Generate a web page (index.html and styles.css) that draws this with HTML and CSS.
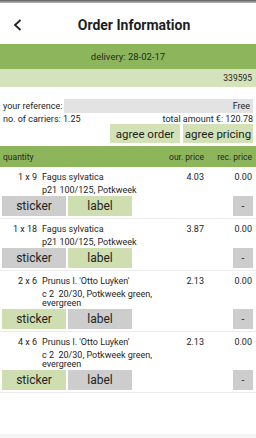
FILE: index.html
```html
<!DOCTYPE html>
<html>
<head>
<meta charset="utf-8">
<link rel="stylesheet" href="styles.css">
</head>
<body>
<div class="statusbar"></div>
<header class="appbar">
  <span class="back"><svg width="10" height="12" viewBox="0 0 10 12"><polyline points="7.5,1 2,6 7.5,11" fill="none" stroke="#222" stroke-width="1.8"/></svg></span>
  <h1 class="title">Order Information</h1>
  <span></span>
</header>
<div class="delivery">delivery: 28-02-17</div>
<div class="orderno">339595</div>
<section class="info">
  <div class="ref-row">
    <span class="ref-label">your reference:</span>
    <div class="ref-input">Free</div>
  </div>
  <div class="totals-row">
    <span>no. of carriers: 1.25</span>
    <span>total amount €: 120.78</span>
  </div>
  <div class="agree-row">
    <button class="btn agree">agree order</button>
    <button class="btn agree">agree pricing</button>
  </div>
</section>
<div class="table-head grid">
  <span>quantity</span>
  <span></span>
  <span class="num">our. price</span>
  <span class="num">rec. price</span>
</div>
<div class="rows">
  <div class="row">
    <div class="grid">
      <span class="qty">1 x 9</span>
      <span class="name">Fagus sylvatica</span>
      <span class="num">4.03</span>
      <span class="num">0.00</span>
      <span></span>
      <span class="desc">p21 100/125, Potkweek</span>
    </div>
    <div class="actions">
      <button class="btn grey">sticker</button>
      <button class="btn green">label</button>
      <span class="spacer"></span>
      <button class="btn grey small">-</button>
    </div>
  </div>
  <div class="row">
    <div class="grid">
      <span class="qty">1 x 18</span>
      <span class="name">Fagus sylvatica</span>
      <span class="num">3.87</span>
      <span class="num">0.00</span>
      <span></span>
      <span class="desc">p21 100/125, Potkweek</span>
    </div>
    <div class="actions">
      <button class="btn grey">sticker</button>
      <button class="btn green">label</button>
      <span class="spacer"></span>
      <button class="btn grey small">-</button>
    </div>
  </div>
  <div class="row">
    <div class="grid">
      <span class="qty">2 x 6</span>
      <span class="name">Prunus l. 'Otto Luyken'</span>
      <span class="num">2.13</span>
      <span class="num">0.00</span>
      <span></span>
      <span class="desc">c 2&nbsp; 20/30, Potkweek green, evergreen</span>
    </div>
    <div class="actions">
      <button class="btn green">sticker</button>
      <button class="btn grey">label</button>
      <span class="spacer"></span>
      <button class="btn grey small">-</button>
    </div>
  </div>
  <div class="row">
    <div class="grid">
      <span class="qty">4 x 6</span>
      <span class="name">Prunus l. 'Otto Luyken'</span>
      <span class="num">2.13</span>
      <span class="num">0.00</span>
      <span></span>
      <span class="desc">c 2&nbsp; 20/30, Potkweek green, evergreen</span>
    </div>
    <div class="actions">
      <button class="btn green">sticker</button>
      <button class="btn grey">label</button>
      <span class="spacer"></span>
      <button class="btn grey small">-</button>
    </div>
  </div>
</div>
<div class="navbar"></div>
</body>
</html>
```

FILE: styles.css
```css
* { box-sizing: border-box; }
html, body {
  margin: 0;
  padding: 0;
  background: #fff;
}
body {
  width: 256px;
  height: 438px;
  position: relative;
  overflow: hidden;
  font-family: Roboto, "Noto Sans", sans-serif;
  font-size: 9px;
  color: #242424;
}
.statusbar {
  height: 3px;
  background: linear-gradient(#5a5a5a, #bdbdbd);
}
.appbar {
  height: 41px;
  display: grid;
  grid-template-columns: 30px 1fr 18px;
  align-items: center;
  background: #fff;
}
.back {
  display: flex;
  justify-content: flex-start;
  padding-left: 13px;
  padding-top: 3px;
}
.back svg { display: block; }
.title {
  margin: 0;
  text-align: center;
  font-size: 14px;
  font-weight: bold;
  color: #1e1e1e;
  padding-top: 2px;
}
.delivery {
  height: 25px;
  background: #8db65c;
  display: flex;
  align-items: center;
  justify-content: center;
  font-size: 9.5px;
  color: #262626;
}
.orderno {
  height: 18px;
  background: #d4e3bb;
  display: flex;
  align-items: center;
  justify-content: flex-end;
  padding-right: 4px;
  font-size: 8.5px;
}
.info {
  padding: 12px 3px 0 3px;
}
.ref-row {
  display: flex;
  align-items: center;
  height: 14px;
}
.ref-label {
  width: 61px;
  flex: none;
}
.ref-input {
  flex: 1;
  height: 14px;
  background: #e3e3e3;
  display: flex;
  align-items: center;
  justify-content: flex-end;
  padding-right: 3px;
}
.totals-row {
  display: flex;
  justify-content: space-between;
  align-items: center;
  height: 12px;
}
.agree-row {
  display: flex;
  justify-content: flex-end;
  gap: 3px;
  margin-top: -1px;
}
.btn {
  border: 0;
  margin: 0;
  padding: 0;
  font-family: Roboto, "Noto Sans", sans-serif;
  color: #222;
  height: 20px;
  display: flex;
  align-items: center;
  justify-content: center;
}
.agree {
  width: 70px;
  height: 19px;
  font-size: 11.5px;
  background: #d2e1b6;
}
.grid {
  display: grid;
  grid-template-columns: 37px 1fr 40px 43px;
  column-gap: 5px;
  padding-right: 4px;
  align-items: center;
}
.grid .num { text-align: right; }
.table-head {
  height: 21px;
  margin-top: 3px;
  background: #8db65c;
  padding-left: 3px;
  color: #262626;
  font-size: 8.5px;
}
.table-head span:first-child { grid-column: 1 / 3; }
.table-head span:nth-child(2) { display: none; }
.row {
  border-bottom: 1px solid #ececec;
  padding: 3px 0 2px 0;
}
.row .grid { grid-template-rows: 14px auto; }
.qty { text-align: right; }
.name { white-space: nowrap; }
.desc {
  grid-column: 2 / 4;
  line-height: 9px;
  padding-top: 2px;
  padding-right: 20px;
}
.actions {
  display: flex;
  gap: 2px;
  padding: 0 3px 0 2px;
  margin-top: 1px;
}
.actions .btn {
  width: 64px;
  font-size: 12px;
}
.actions .spacer { flex: 1; }
.actions .btn.small {
  width: 20px;
  font-size: 10px;
}
.grey { background: #cdcdcd; }
.green { background: #cfdeb0; }
.navbar {
  position: absolute;
  left: 0;
  right: 0;
  bottom: 0;
  height: 4px;
  background: #f4f4f4;
}
```
